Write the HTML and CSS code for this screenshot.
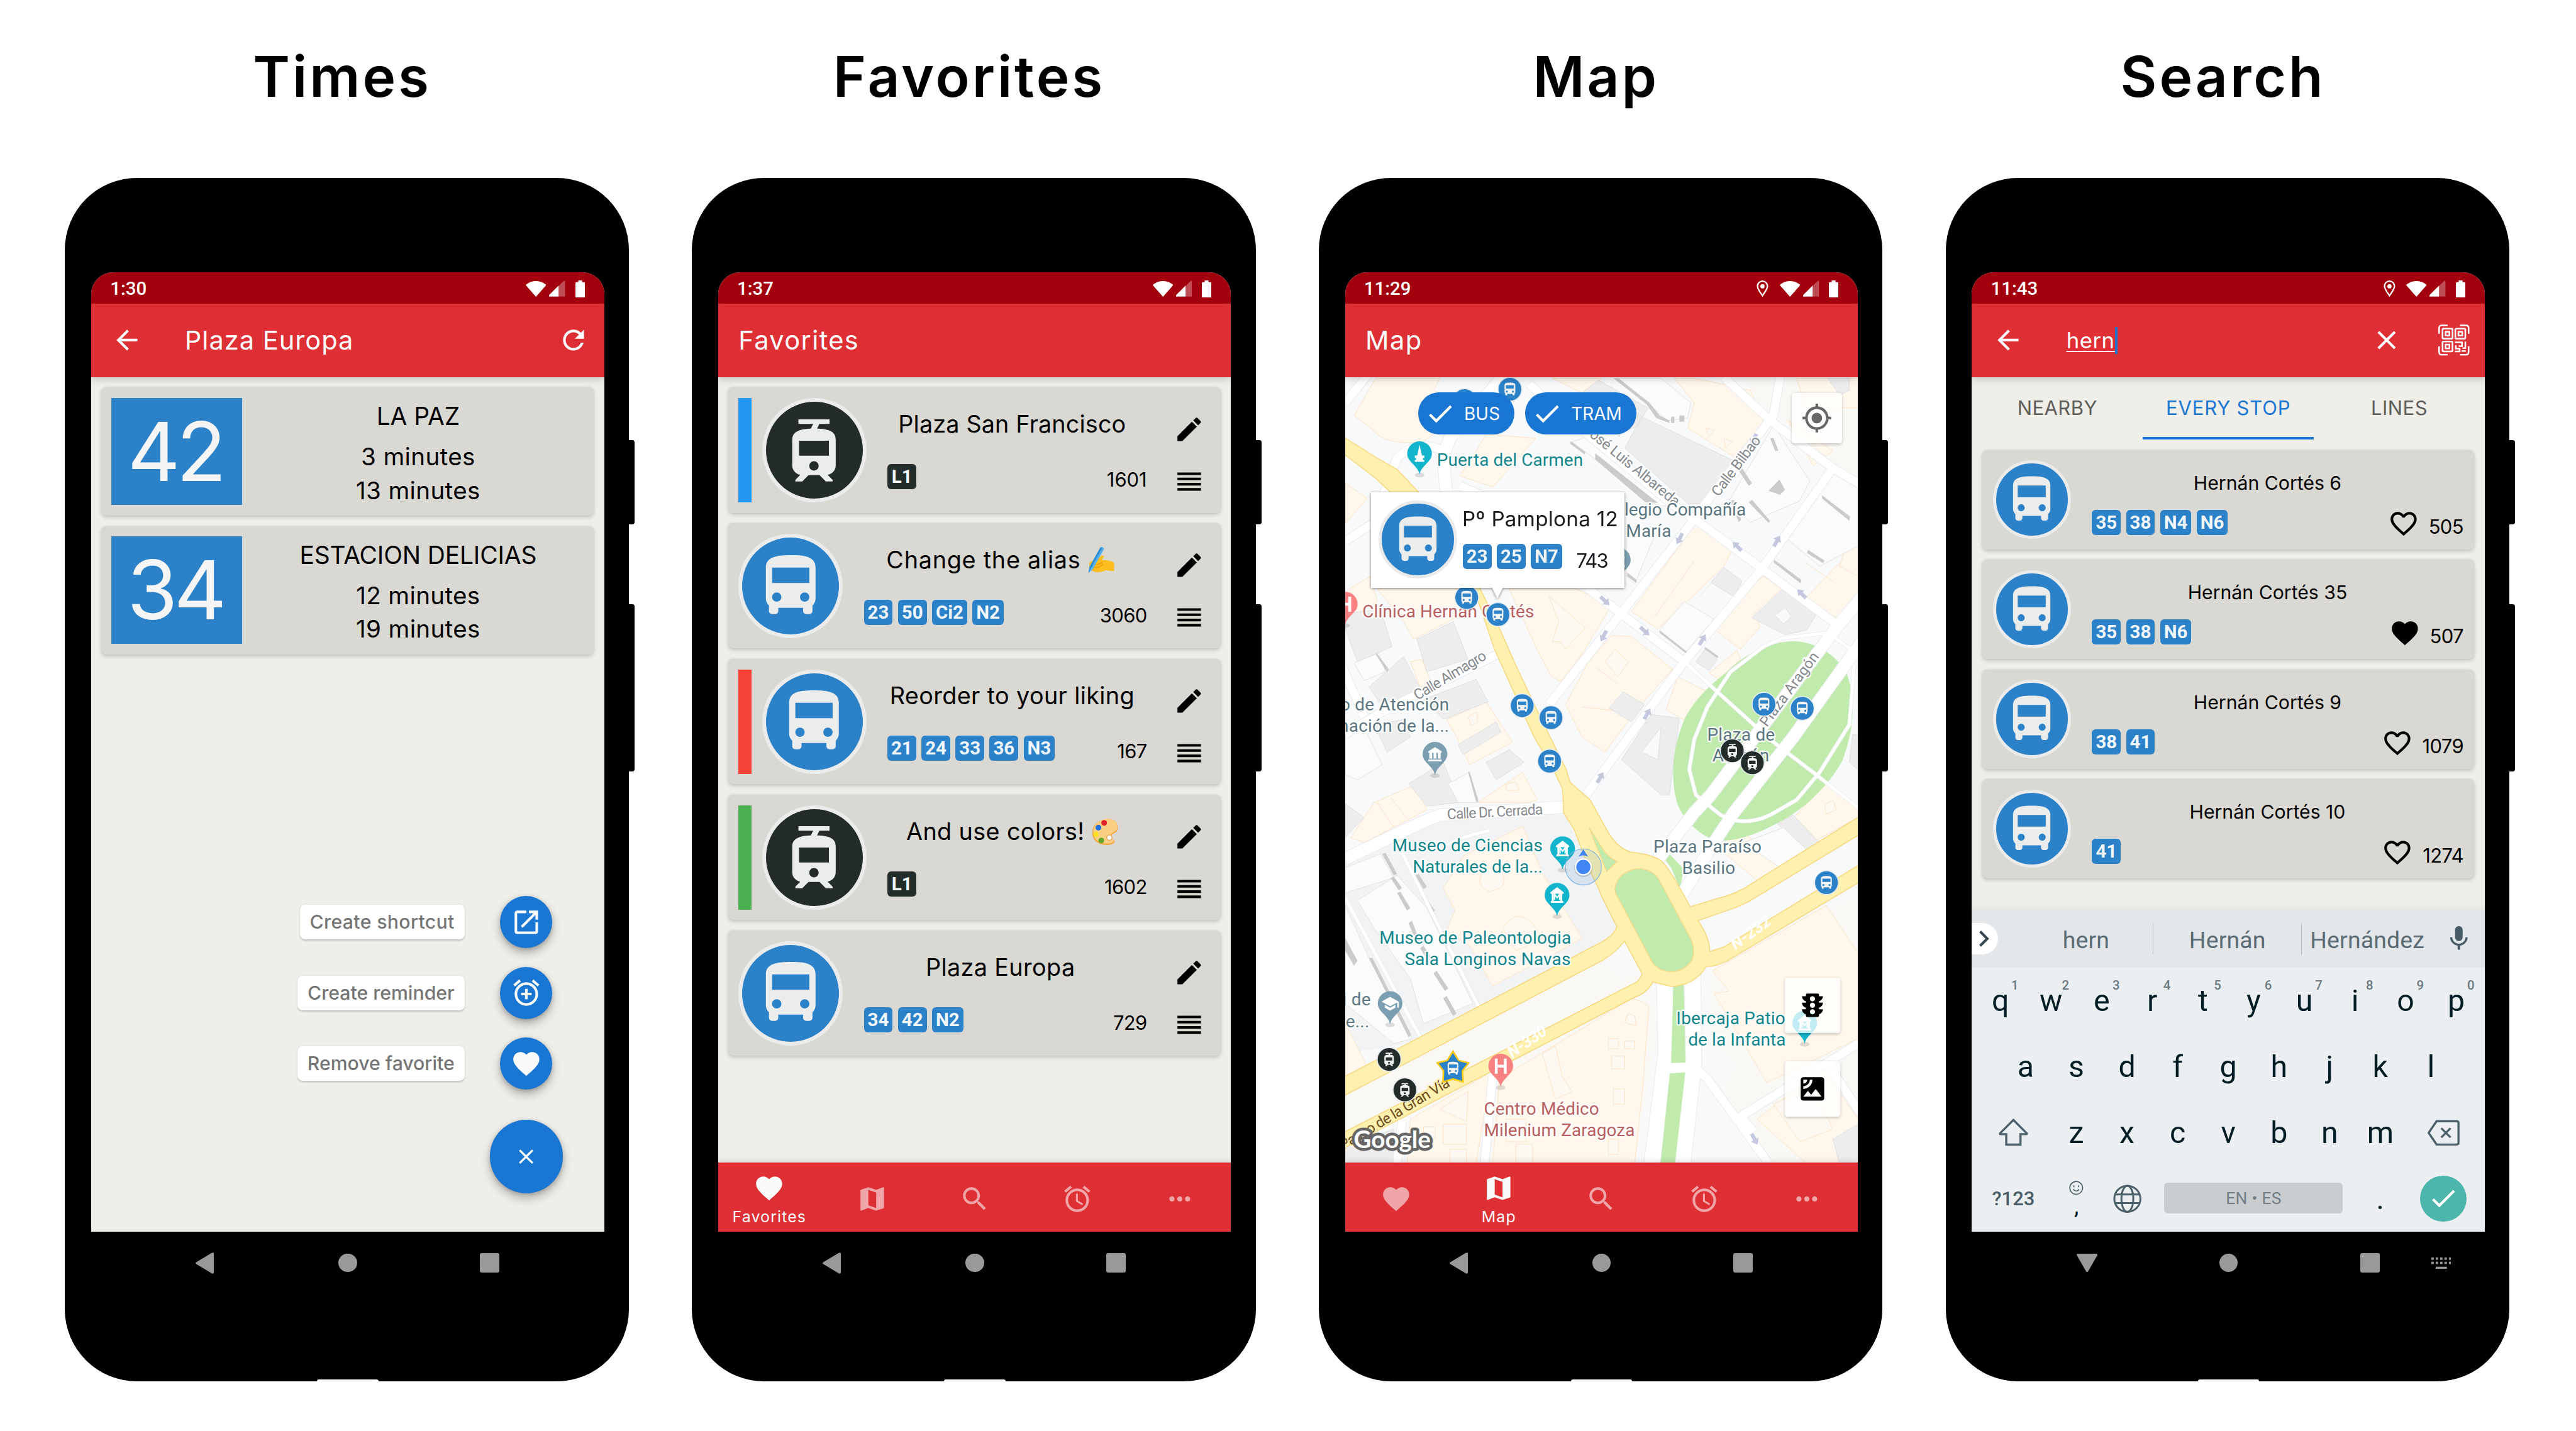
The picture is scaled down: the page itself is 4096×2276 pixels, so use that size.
FILE: index.html
```
<!DOCTYPE html>
<html lang="en">
<head>
<meta charset="utf-8">
<title>Bus and tram app</title>
<link rel="stylesheet" href="styles.css">
</head>
<body>
<svg class="sprite" aria-hidden="true">
  <symbol id="i-back" viewBox="0 0 24 24"><path d="M20 11H7.83l5.59-5.59L12 4l-8 8 8 8 1.41-1.41L7.83 13H20v-2z"/></symbol>
  <symbol id="i-refresh" viewBox="0 0 24 24"><path d="M17.65 6.35C16.2 4.9 14.21 4 12 4c-4.42 0-7.99 3.58-7.99 8s3.57 8 7.99 8c3.73 0 6.84-2.55 7.73-6h-2.08c-.82 2.33-3.04 4-5.65 4-3.31 0-6-2.69-6-6s2.69-6 6-6c1.66 0 3.14.69 4.22 1.78L13 11h7V4l-2.35 2.35z"/></symbol>
  <symbol id="i-open" viewBox="0 0 24 24"><path d="M19 19H5V5h7V3H5c-1.11 0-2 .9-2 2v14c0 1.1.89 2 2 2h14c1.1 0 2-.9 2-2v-7h-2v7zM14 3v2h3.59l-9.83 9.83 1.41 1.41L19 6.41V10h2V3h-7z"/></symbol>
  <symbol id="i-addalarm" viewBox="0 0 24 24"><path d="M7.88 3.39L6.6 1.86 2 5.71l1.29 1.53 4.59-3.85zM22 5.72l-4.6-3.86-1.29 1.53 4.6 3.86L22 5.72zM12 4c-4.97 0-9 4.03-9 9s4.02 9 9 9c4.97 0 9-4.03 9-9s-4.03-9-9-9zm0 16c-3.87 0-7-3.13-7-7s3.13-7 7-7 7 3.13 7 7-3.13 7-7 7zm1-11h-2v3H8v2h3v3h2v-3h3v-2h-3V9z"/></symbol>
  <symbol id="i-alarm" viewBox="0 0 24 24"><path d="M22 5.72l-4.6-3.86-1.29 1.53 4.6 3.86L22 5.72zM7.88 3.39L6.6 1.86 2 5.71l1.29 1.53 4.59-3.85zM12.5 8H11v6l4.75 2.85.75-1.23-4-2.37V8zM12 4c-4.97 0-9 4.03-9 9s4.02 9 9 9c4.97 0 9-4.03 9-9s-4.03-9-9-9zm0 16c-3.87 0-7-3.13-7-7s3.13-7 7-7 7 3.13 7 7-3.13 7-7 7z"/></symbol>
  <symbol id="i-heart" viewBox="0 0 24 24"><path d="M12 21.35l-1.45-1.32C5.4 15.36 2 12.28 2 8.5 2 5.42 4.42 3 7.5 3c1.74 0 3.41.81 4.5 2.09C13.09 3.81 14.76 3 16.5 3 19.58 3 22 5.42 22 8.5c0 3.78-3.4 6.86-8.55 11.54L12 21.35z"/></symbol>
  <symbol id="i-heart-line" viewBox="0 0 24 24"><path d="M16.5 3c-1.74 0-3.41.81-4.5 2.09C10.91 3.81 9.24 3 7.5 3 4.42 3 2 5.42 2 8.5c0 3.78 3.4 6.86 8.55 11.54L12 21.35l1.45-1.32C18.6 15.36 22 12.28 22 8.5 22 5.42 19.58 3 16.5 3zm-4.4 15.55l-.1.1-.1-.1C7.14 14.24 4 11.39 4 8.5 4 6.5 5.5 5 7.5 5c1.54 0 3.04.99 3.57 2.36h1.87C13.46 5.99 14.96 5 16.5 5c2 0 3.5 1.5 3.5 3.5 0 2.89-3.14 5.74-7.9 10.05z"/></symbol>
  <symbol id="i-close" viewBox="0 0 24 24"><path d="M19 6.41L17.59 5 12 10.59 6.41 5 5 6.41 10.59 12 5 17.59 6.41 19 12 13.41 17.59 19 19 17.59 13.41 12z"/></symbol>
  <symbol id="i-edit" viewBox="0 0 24 24"><path d="M3 17.25V21h3.75L17.81 9.94l-3.75-3.75L3 17.25zM20.71 7.04c.39-.39.39-1.02 0-1.41l-2.34-2.34c-.39-.39-1.02-.39-1.41 0l-1.83 1.83 3.75 3.75 1.83-1.83z"/></symbol>
  <symbol id="i-reorder" viewBox="0 0 24 24"><path d="M3 15h18v-2H3v2zm0 4h18v-2H3v2zm0-8h18V9H3v2zm0-6v2h18V5H3z"/></symbol>
  <symbol id="i-map" viewBox="0 0 24 24"><path d="M20.5 3l-.16.03L15 5.1 9 3 3.36 4.9c-.21.07-.36.25-.36.48V20.5c0 .28.22.5.5.5l.16-.03L9 18.9l6 2.1 5.64-1.9c.21-.07.36-.25.36-.48V3.5c0-.28-.22-.5-.5-.5zM15 19l-6-2.11V5l6 2.11V19z"/></symbol>
  <symbol id="i-search" viewBox="0 0 24 24"><path d="M15.5 14h-.79l-.28-.27C15.41 12.59 16 11.11 16 9.5 16 5.91 13.09 3 9.5 3S3 5.91 3 9.5 5.91 16 9.5 16c1.61 0 3.09-.59 4.23-1.57l.27.28v.79l5 4.99L20.49 19l-4.99-5zm-6 0C7.01 14 5 11.99 5 9.5S7.01 5 9.5 5 14 7.01 14 9.5 11.99 14 9.5 14z"/></symbol>
  <symbol id="i-more" viewBox="0 0 24 24"><path d="M6 10c-1.1 0-2 .9-2 2s.9 2 2 2 2-.9 2-2-.9-2-2-2zm12 0c-1.1 0-2 .9-2 2s.9 2 2 2 2-.9 2-2-.9-2-2-2zm-6 0c-1.1 0-2 .9-2 2s.9 2 2 2 2-.9 2-2-.9-2-2-2z"/></symbol>
  <symbol id="i-check" viewBox="0 0 24 24"><path d="M9 16.17L4.83 12l-1.42 1.41L9 19 21 7l-1.41-1.41z"/></symbol>
  <symbol id="i-gps" viewBox="0 0 24 24"><path d="M12 8c-2.21 0-4 1.79-4 4s1.790 4 4 4 4-1.790 4-4-1.790-4-4-4zm8.940 3c-.46-4.170-3.770-7.480-7.940-7.940V1h-2v2.060C6.830 3.520 3.520 6.830 3.060 11H1v2h2.060c.46 4.170 3.770 7.480 7.940 7.940V23h2v-2.060c4.170-.46 7.480-3.770 7.940-7.940H23v-2h-2.060zM12 19c-3.870 0-7-3.130-7-7s3.130-7 7-7 7 3.130 7 7-3.130 7-7 7z"/></symbol>
  <symbol id="i-traffic" viewBox="0 0 24 24"><path d="M20 10h-3V8.860c1.720-.45 3-2 3-3.860h-3V4c0-.55-.45-1-1-1H8c-.55 0-1 .45-1 1v1H4c0 1.860 1.280 3.410 3 3.860V10H4c0 1.860 1.280 3.410 3 3.860V15H4c0 1.860 1.280 3.410 3 3.860V20c0 .55.45 1 1 1h8c.55 0 1-.45 1-1v-1.140c1.720-.45 3-2 3-3.860h-3v-1.140c1.720-.45 3-2 3-3.860zm-8 9c-1.110 0-2-.9-2-2s.89-2 2-2c1.100 0 2 .9 2 2s-.89 2-2 2zm0-5c-1.110 0-2-.9-2-2s.89-2 2-2c1.100 0 2 .9 2 2s-.89 2-2 2zm0-5c-1.110 0-2-.9-2-2 0-1.110.89-2 2-2 1.100 0 2 .89 2 2 0 1.100-.89 2-2 2z"/></symbol>
  <symbol id="i-satellite" viewBox="0 0 24 24"><path d="M19 3H5c-1.100 0-2 .9-2 2v14c0 1.100.9 2 2 2h14c1.100 0 2-.9 2-2V5c0-1.100-.9-2-2-2zM5 4.990h3C8 6.650 6.660 8 5 8V4.990zM5 12v-2c2.760 0 5-2.250 5-5.010h2C12 8.860 8.870 12 5 12zm0 6l3.500-4.500 2.500 3.010L14.500 12l4.500 6H5z"/></symbol>
  <symbol id="i-mic" viewBox="0 0 24 24"><path d="M12 14c1.660 0 3-1.340 3-3V5c0-1.660-1.340-3-3-3S9 3.340 9 5v6c0 1.660 1.340 3 3 3zm5.300-3c0 3-2.540 5.100-5.300 5.100S6.700 14 6.700 11H5c0 3.410 2.720 6.230 6 6.720V21h2v-3.280c3.280-.48 6-3.300 6-6.720h-1.700z"/></symbol>
  <symbol id="i-bus" viewBox="0 0 24 24"><path d="M4 16c0 .88.39 1.67 1 2.22V20c0 .55.45 1 1 1h1c.55 0 1-.45 1-1v-1h8v1c0 .55.45 1 1 1h1c.55 0 1-.45 1-1v-1.78c.61-.55 1-1.34 1-2.22V6c0-3.5-3.58-4-8-4s-8 .5-8 4v10zm3.5 1c-.83 0-1.500-.67-1.500-1.500S6.670 14 7.500 14s1.500.67 1.500 1.500S8.330 17 7.500 17zm9 0c-.83 0-1.500-.67-1.500-1.500s.67-1.500 1.500-1.500 1.500.67 1.500 1.500-.67 1.500-1.500 1.500zm1.500-6H6V6h12v5z"/></symbol>
  <symbol id="i-tram" viewBox="0 0 24 24"><path fill-rule="evenodd" d="M19 16.940V8.500c0-2.790-2.610-3.400-6.010-3.490l.76-1.510H17V2H7v1.500h4.750l-.76 1.520C7.860 5.110 5 5.730 5 8.500v8.440c0 1.450 1.190 2.660 2.590 2.970L6 21.500v.5h2.230l2-2H13.800l2 2H18v-.5l-1.600-1.600C17.800 19.600 19 18.390 19 16.940zM12 18.500c-.83 0-1.500-.67-1.500-1.500s.67-1.500 1.500-1.500 1.500.67 1.500 1.500-.67 1.500-1.500 1.500zm4.800-4.800H7.200V8.900h9.600z"/></symbol>
  <symbol id="i-wifi" viewBox="0 0 43 33"><path d="M.8 7.200Q21.500-7.200 42.200 7.200q1.200 1 .2 2.200L21.500 33 .6 9.400Q-.4 8.200.8 7.200z"/></symbol>
  <symbol id="i-signal" viewBox="0 0 34 34"><path opacity=".3" d="M1 34h31q2 0 2-2V2q-1-3-3-1L0 31q-1 3 1 3z"/><path d="M1 34h19V11L0 31q-1 3 1 3z"/></symbol>
  <symbol id="i-battery" viewBox="0 0 20 36"><path d="M6 0h8v3.500h4q2 0 2 2V34q0 2-2 2H2q-2 0-2-2V5.500q0-2 2-2h4z"/></symbol>
  <symbol id="i-place" viewBox="0 0 25 35"><path fill="none" stroke="#fff" stroke-width="3" d="M12.500 32C8 25 2 19 2 12a10.500 10.500 0 0 1 21 0c0 7-6 13-10.500 20z"/><circle cx="12.500" cy="12.500" r="4.500"/></symbol>
  <symbol id="i-qr" viewBox="0 0 66 66"><g fill="none" stroke="#fff" stroke-width="3.400"><path d="M1.700 20V8q0-6 6-6h12M46 2h12q6 0 6 6v12M1.700 46v12q0 6 6 6h12M46 64h12q6 0 6-6V46"/><rect x="9" y="9" width="21" height="21" rx="2"/><rect x="36" y="9" width="21" height="21" rx="2"/><rect x="9" y="36" width="21" height="21" rx="2"/><rect x="15.500" y="15.500" width="8" height="8"/><rect x="42.500" y="15.500" width="8" height="8"/><rect x="15.500" y="42.500" width="8" height="8"/><path d="M35 37.700h15v8h-7M57 36v14h-6M37 44v7h8v6H35M49 56h9"/></g></symbol>
  <symbol id="n-left" viewBox="0 0 39 45"><path d="M1.500 20.500 34 1q4-2 4.500 2v39q-.5 4-4.500 2L1.500 24.500q-3-2 0-4z"/></symbol>
  <symbol id="n-down" viewBox="0 0 44 39"><path d="M20 37.500.8 4Q-1 .5 3 0h38q4 .5 2.200 4L24 37.500q-2 3-4 0z"/></symbol>
  <symbol id="n-keys" viewBox="0 0 42 24"><path d="M0 0h5v5H0zM9.200 0h5v5h-5zM18.500 0h5v5h-5zM27.700 0h5v5h-5zM37 0h5v5h-5zM0 9h5v5H0zM9.200 9h5v5h-5zM18.500 9h5v5h-5zM27.700 9h5v5h-5zM37 9h5v5h-5zM9.200 19.500h23.500V24H9.200z"/></symbol>
  <symbol id="e-write" viewBox="0 0 56 56"><path d="M3 40Q1 30 10 29q3-7 12-5l7-6q4-1 5 2l-5 7 12 1q12 2 14 6v17L38 49q-15 7-27 2Q3 48 3 40z" fill="#fcbe1e"/><path d="M8 42q14 4 24-6M12 36q10 3 18-4" fill="none" stroke="#e89b00" stroke-width="2"/><path d="M26 1q6-2 8 3L10 47 1 55l2-13z" fill="#5ab3ec"/><path d="M26 1q3-1 5 0L5 47l-4 8 2-13z" fill="#2d8fd5"/></symbol>
  <symbol id="e-palette" viewBox="0 0 56 56"><path d="M28 2C44-3 58 8 54 24c-2 8-12 6-13 13s8 7 7 12-14 8-24 6C6 52-2 38 2 22 6 10 16 3 28 2z" fill="#f3a641"/><path d="M29 1C44-2 57 8 53 22c-2 7-13 7-14 14s8 7 7 11-12 7-21 5C8 49 0 36 4 21 8 9 18 2 29 1z" fill="#fbcf83"/><circle cx="26" cy="9" r="6" fill="#e0242c"/><circle cx="14" cy="19" r="6" fill="#1f6fe0"/><circle cx="9" cy="33" r="5.500" fill="#ffe01b"/><circle cx="20" cy="46" r="6" fill="#62a829"/><circle cx="37" cy="40" r="5.500" fill="#fff" stroke="#e8a95b" stroke-width="2"/></symbol>
  <symbol id="m-bus" viewBox="-27 -27 54 54"><circle r="25" fill="#2c82c9" stroke="#e6ebef" stroke-width="2"/><use href="#i-bus" x="-17" y="-17" width="34" height="34" fill="#f1f3f4"/></symbol>
  <symbol id="m-tram" viewBox="-27 -27 54 54"><circle r="25" fill="#232b2b" stroke="#e6ebef" stroke-width="2"/><use href="#i-tram" x="-17" y="-17" width="34" height="34" fill="#f1f3f4"/></symbol>
  <symbol id="m-museum" viewBox="-27 -27 54 78"><ellipse cy="45" rx="10" ry="5" fill="#000" opacity=".12"/><path d="M0 44C-3 25-26 18-26 0a26 26 0 0 1 52 0C26 18 3 25 0 44z" fill="#12b5cb"/><path d="M0-17 14-6v3H-14v-3zM-13 12h26v4h-26zM-11-3h4v15h-4zM7-3h4v15H7z" fill="#fff"/><path d="M-5.500 10V-2L0 5l5.500-7v12" fill="none" stroke="#fff" stroke-width="3"/></symbol>
  <symbol id="m-civic" viewBox="-27 -27 54 78"><ellipse cy="45" rx="10" ry="5" fill="#000" opacity=".12"/><path d="M0 44C-3 25-26 18-26 0a26 26 0 0 1 52 0C26 18 3 25 0 44z" fill="#7b9eb0"/><path d="M0-15 14-6v3H-14v-3zM-14 11h28v4h-28zM-12-3h6v12h-6zM-3-3h6v12h-6zM6-3h6v12H6z" fill="#fff"/></symbol>
  <symbol id="m-school" viewBox="-27 -27 54 78"><ellipse cy="45" rx="10" ry="5" fill="#000" opacity=".12"/><path d="M0 44C-3 25-26 18-26 0a26 26 0 0 1 52 0C26 18 3 25 0 44z" fill="#7b9eb0"/><path d="M0-14 18-4v13h-3V-2L0 6-18-4zM-11 3 0 9 11 3v6L0 15-11 9z" fill="#fff"/></symbol>
  <symbol id="m-monument" viewBox="-27 -27 54 78"><ellipse cy="45" rx="10" ry="5" fill="#000" opacity=".12"/><path d="M0 44C-3 25-26 18-26 0a26 26 0 0 1 52 0C26 18 3 25 0 44z" fill="#12b5cb"/><path d="M0-19 5 4h5v5H7v4h3v4h-20v-4h3V9h-3V4h5z" fill="#fff"/></symbol>
  <symbol id="m-hospital" viewBox="-27 -27 54 78"><ellipse cy="45" rx="10" ry="5" fill="#000" opacity=".12"/><path d="M0 44C-3 25-26 18-26 0a26 26 0 0 1 52 0C26 18 3 25 0 44z" fill="#f88181"/><path d="M-9.500-16v32M9.500-16v32M-9.500 0h19" stroke="#fff" stroke-width="6" fill="none"/></symbol>
  <symbol id="m-arrow" viewBox="-14 -14 28 28"><path d="M-4 13V-1h-5L0-13 9-1H4v14z" fill="#c3c8de"/></symbol>
</svg>

<main class="showcase">

  <section class="column">
    <h1 class="title">Times</h1>
    <div class="phone">
      <div class="screen">
        <div class="status"><span>1:30</span><svg class="wifi"><use href="#i-wifi"/></svg><svg class="signal"><use href="#i-signal"/></svg><svg class="battery"><use href="#i-battery"/></svg></div>
        <header class="appbar"><svg class="icon back"><use href="#i-back"/></svg><h2>Plaza Europa</h2><svg class="icon end"><use href="#i-refresh"/></svg></header>
        <div class="list">
          <article class="card time"><div class="line">42</div><div class="arrivals"><h3>LA PAZ</h3><p>3 minutes</p><p>13 minutes</p></div></article>
          <article class="card time"><div class="line">34</div><div class="arrivals"><h3>ESTACION DELICIAS</h3><p>12 minutes</p><p>19 minutes</p></div></article>
        </div>
        <div class="actions">
          <div class="action"><span class="a1">Create shortcut</span><i class="fab"><svg class="icon"><use href="#i-open"/></svg></i></div>
          <div class="action"><span>Create reminder</span><i class="fab"><svg class="icon"><use href="#i-addalarm"/></svg></i></div>
          <div class="action"><span>Remove favorite</span><i class="fab"><svg class="icon"><use href="#i-heart"/></svg></i></div>
          <i class="fab main"><svg><use href="#i-close"/></svg></i>
        </div>
      </div>
      <nav class="system"><svg class="tri"><use href="#n-left"/></svg><i class="dot"></i><i class="square"></i></nav>
      <i class="key power"></i><i class="key volume"></i><i class="port"></i>
    </div>
  </section>

  <section class="column">
    <h1 class="title">Favorites</h1>
    <div class="phone">
      <div class="screen">
        <div class="status"><span>1:37</span><svg class="wifi"><use href="#i-wifi"/></svg><svg class="signal"><use href="#i-signal"/></svg><svg class="battery"><use href="#i-battery"/></svg></div>
        <header class="appbar top"><h2>Favorites</h2></header>
        <div class="list">
          <article class="card fav"><i class="tag blue"></i><i class="stop tram"><svg><use href="#i-tram"/></svg></i><div class="info"><h3 class="n1">Plaza San Francisco</h3><div class="meta"><b class="dark">L1</b><span class="n1601">1601</span></div></div><div class="tools"><svg class="icon"><use href="#i-edit"/></svg><svg class="icon"><use href="#i-reorder"/></svg></div></article>
          <article class="card fav"><i class="stop"><svg><use href="#i-bus"/></svg></i><div class="info"><h3 class="n2">Change the alias <svg class="emoji"><use href="#e-write"/></svg></h3><div class="meta"><b>23</b><b>50</b><b>Ci2</b><b>N2</b><span>3060</span></div></div><div class="tools"><svg class="icon"><use href="#i-edit"/></svg><svg class="icon"><use href="#i-reorder"/></svg></div></article>
          <article class="card fav"><i class="tag red"></i><i class="stop"><svg><use href="#i-bus"/></svg></i><div class="info"><h3>Reorder to your liking</h3><div class="meta"><b>21</b><b>24</b><b>33</b><b>36</b><b>N3</b><span>167</span></div></div><div class="tools"><svg class="icon"><use href="#i-edit"/></svg><svg class="icon"><use href="#i-reorder"/></svg></div></article>
          <article class="card fav"><i class="tag green"></i><i class="stop tram"><svg><use href="#i-tram"/></svg></i><div class="info"><h3>And use colors! <svg class="emoji"><use href="#e-palette"/></svg></h3><div class="meta"><b class="dark">L1</b><span>1602</span></div></div><div class="tools"><svg class="icon"><use href="#i-edit"/></svg><svg class="icon"><use href="#i-reorder"/></svg></div></article>
          <article class="card fav"><i class="stop"><svg><use href="#i-bus"/></svg></i><div class="info"><h3>Plaza Europa</h3><div class="meta"><b>34</b><b>42</b><b>N2</b><span>729</span></div></div><div class="tools"><svg class="icon"><use href="#i-edit"/></svg><svg class="icon"><use href="#i-reorder"/></svg></div></article>
        </div>
        <footer class="tabs"><a class="on"><svg class="icon"><use href="#i-heart"/></svg>Favorites</a><a><svg class="icon"><use href="#i-map"/></svg></a><a><svg class="icon"><use href="#i-search"/></svg></a><a><svg class="icon"><use href="#i-alarm"/></svg></a><a><svg class="icon"><use href="#i-more"/></svg></a></footer>
      </div>
      <nav class="system"><svg class="tri"><use href="#n-left"/></svg><i class="dot"></i><i class="square"></i></nav>
      <i class="key power"></i><i class="key volume"></i><i class="port"></i>
    </div>
  </section>

  <section class="column">
    <h1 class="title">Map</h1>
    <div class="phone">
      <div class="screen">
        <div class="status"><span>11:29</span><svg class="place"><use href="#i-place"/></svg><svg class="wifi"><use href="#i-wifi"/></svg><svg class="signal"><use href="#i-signal"/></svg><svg class="battery"><use href="#i-battery"/></svg></div>
        <header class="appbar top"><h2>Map</h2></header>
        <div class="map">
          <svg class="terrain" viewBox="3 8 1553.500 3125" preserveAspectRatio="none">
            <defs>
              <g id="lanes-s"><path d="M1490 1010 1470 1025 1330 1045 1270 1080 1170 1180 1100 1320 1060 1450 1045 1568 1065 1670 1140 1750Q1210 1800 1290 1750L1370 1690 1440 1580 1530 1390 1545 1150M1030 1140 1130 1260 1290 1450 1420 1580 1556 1720M440 1812Q340 1840 300 1880M175 1900 410 2520M3 2080 235 2645M1470 1030 1556 1110"/></g>
              <g id="lanes-m"><path d="M560 35 640 130 1000 520 1070 580 1265 770 1500 1000M1320 8 1300 160 1100 500 1050 590 840 945 620 1310M1150 8 1290 180 1480 370 1570 440M1480 370 1265 770 1030 1140 735 1665M735 845 840 950 1030 1140M465 1110 100 1350 3 1430M-5 1160 60 1360M1060 2755 1100 2800 1285 3136M1556 2660 1200 2950 1240 3010M175 2970 160 3136M450 2780 425 3136M1470 2750 1570 2950M300 300Q220 250 160 330L120 470M75 -8 3 110M3 660 110 570M350 440 420 480"/></g>
              <g id="lanes-l"><path d="M1570 880 1490 1005 1300 1340 1110 1670 1060 1740 945 1935M1570 1055 1360 1440 1180 1740 1100 1900 1022 2070M670 1718 290 1750Q260 1760 3 1925M490 -8 320 250 300 320 308 460"/></g>
              <g id="lanes-xl"><path d="M970 2400 975 2700 932 3140M1055 2380 1058 2740 1025 3140M975 2755H1065"/></g>
            </defs>
            <rect x="3" y="8" width="1554" height="3126" fill="#f8f9fb"/>
            <path fill="#f1f3f5" d="M3 1930 290 1760 664 1735 827 2195 780 2260 410 2530 235 2650 3 2700z"/>
            <path fill="#f9f8f4" d="M1210 8h346v420L1330 180 1240 90zM1110 2370 1400 2160 1556 2080V3136H1290L1080 2740 1100 2600zM3 2865 780 2330 849 2252 900 2375 880 2420 3 3008zM680 2600 930 2440 950 2600 880 3136H200L450 2780z"/>
            <path fill="#f8f9fb" d="M780 2320 849 2252 900 2375 840 2400zM1090 2600 1180 2740 1150 2850 1085 2740z"/>
            <g class="beige">
              <path d="M95 12H290L270 60 370 130 240 265Q120 280 90 220L30 160zM430 235 580 250 450 445 350 400 400 300zM3 430 70 490 3 590zM630 12H780L720 70zM1000 12H1060L1230 60 1270 180 1200 340 1040 210 1060 110zM1370 12H1556V130H1400zM1345 180 1480 300 1420 360zM1065 590 1180 680 1150 760 1040 900 950 1010 870 940zM1270 800 1325 850 1240 950 1260 1000 1200 1090 1120 1010 1190 880zM1385 905 1490 760 1556 700V880L1495 965z"/>
              <path d="M1535 620 1556 600V800L1500 760zM500 850H700L810 910 780 980 720 1110 655 1220 625 1195 580 1080zM810 1035 870 1040 995 1170 940 1250 880 1340 790 1500 720 1440 670 1310 740 1140zM1010 1200 1100 1260 1045 1385 975 1330zM1190 1095 1200 1130 1135 1210 1105 1185zM15 850 80 800 100 900 40 950zM100 850H380L400 930 330 970 210 1050 180 980zM200 1140 235 1130 265 1230 230 1240z"/>
              <path d="M310 1370 430 1300 510 1460 380 1550 340 1440zM405 1700 540 1580 585 1690 560 1700zM20 1840 90 1700 215 1630 250 1730 60 1860zM365 1910 540 1795 600 1980 720 2240 640 2300 450 2430 380 2270 310 2210 335 2130 300 2040zM3 2580 75 2765 3 2790zM200 2960 430 2785 440 2800 400 3136H190z"/>
              <path d="M470 2800 870 2480Q930 2500 922 2530L905 2820 880 3136H450zM1115 2370 1460 2110 1556 2300V2640L1280 2815 1120 2460 1165 2450zM1250 2960 1450 2760 1556 2960V3136H1400zM1335 1795 1460 1625 1556 1720V1760L1430 1850zM1140 1890 1190 1815 1370 1930 1290 1985 1250 2010z"/>
            </g>
            <g class="bare">
              <path d="M620 880 730 1005 670 1090 655 1060 630 1060 650 980zM820 1090 860 1140 830 1200 790 1140zM490 1625 520 1620 530 1650 492 1652zM415 1990Q430 1940 480 1980 500 2040 440 2055 400 2030 415 1990zM480 2200Q520 2120 570 2180L600 2240 520 2290zM1095 210 1120 220 1105 245zM1150 250 1175 265 1155 290zM290 2920 375 2850 370 2970zM375 1360 400 1340 405 1380 385 1395zM1455 1710 1480 1690 1490 1730 1460 1745z"/>
              <path d="M300 2980H370V3060H300zM320 3080H370V3136H320zM240 2990H275V3040H240zM490 2960H550V3050H490zM520 3060H570V3136H520zM800 2640H830V2680H800zM850 2650H880V2680H850zM810 2710H850V2760H810zM815 2840H850V2900H815zM800 3040H830V3100H800zM600 2700 640 2670 660 2790 690 2850 640 2880zM860 2540 880 2550 885 2590 850 2575z"/>
              <path d="M1300 2900 1420 2830 1480 3000 1380 3050zM140 1680 200 1780M100 1700 150 1800M940 960 1060 740M760 1160 830 1230M720 1320 850 1340M1075 880 1110 830M1400 750 1480 820"/>
            </g>
            <g class="grey">
              <path d="M720 70 770 20 920 130 890 200 830 240zM900 165 1180 340 1080 510H1040L850 290zM1150 765 1205 820 1180 880 1110 825zM1330 850 1440 930 1400 1015 1335 1032 1235 965zM1095 1085 1130 1130 1105 1175 1065 1140zM3 950 110 930 145 1080 40 1140 3 1010zM220 1050 330 980 375 1130 250 1180zM75 1240 180 1120 240 1270 110 1310z"/>
              <path d="M240 1290 400 1210 435 1300 300 1370zM345 1470 460 1380 475 1420 360 1510zM90 1390 180 1370 200 1440 130 1500zM845 1260 910 1310 870 1380 803 1325zM195 1625 300 1540 350 1700 250 1715zM430 1540 500 1490 545 1540 460 1610zM3 1705 60 1760 3 1840zM930 1350 1015 1365 985 1670H960L840 1530zM3 3070 150 3000 170 3136H3zM1480 3040 1556 2980V3136H1500zM1310 1780 1360 1750 1440 1860 1390 1900zM1540 1430 1530 1540 1556 1570V1430zM1465 12H1530V60L1500 80z"/>
            </g>
            <path class="hole" d="M1335 925 1355 960 1330 990 1305 955zM960 1400 950 1530 900 1500z"/>
            <g class="pale">
              <path d="M690 265 750 240 1010 520 950 520zM830 12H960L1050 110 1040 170 980 180zM1300 200 1410 420 1380 500 1230 585 1165 500zM1340 650 1480 390 1556 450V680L1440 760zM1030 900 1120 970 1035 1100 955 1015zM30 1145 105 1105 125 1180 60 1215zM3 1430 60 1400 115 1550 40 1610 3 1590zM315 1625 378 1580 405 1700 345 1700z"/>
              <path d="M3 1960 110 1905 150 2000 3 2060zM40 2090 160 1990 250 2120 390 2500 240 2580 200 2400 90 2200zM3 2110 75 2320 205 2640 150 2660 3 2500zM1210 1860 1330 1800 1410 1900 1320 1960zM855 640 940 640 880 830 855 800z"/>
            </g>
            <g class="side">
              <path d="M760 310 950 508 912 505 760 335zM685 262 730 305 728 315 684 272zM830 12 925 110 955 160 985 180V190L945 170 915 115 815 12zM990 165H1000V190H990zM1015 160H1030V185H1015zM1170 500 1180 495 1202 575 1195 585zM1225 505 1235 495 1290 580 1285 588zM1195 380 1205 370 1235 430 1225 440zM1290 250 1300 250 1315 300 1305 302zM1285 460 1318 415 1335 455 1320 475zM1447 478 1532 562 1530 580 1447 490zM1303 735 1385 815 1382 828 1300 745zM1405 695 1455 738 1450 748 1402 708zM857 785 886 815 884 826 857 800z"/>
              <path d="M955 1015 1038 1100 1035 1107 955 1025zM1092 1080 1133 1118 1130 1126 1092 1090zM98 1105 135 1170 130 1182 96 1112zM375 1578 380 1578 407 1695 400 1700zM115 1905 125 1900 160 1985 150 1990zM140 2000 150 1995 175 2040 165 2050zM160 2060 170 2055 200 2120 190 2130zM215 1990 225 1985 250 2035 240 2045zM235 2080 245 2075 275 2130 262 2140zM195 2180 205 2170 225 2240 215 2245zM230 2280 240 2270 265 2320 255 2335zM270 2380 280 2370 315 2440 305 2450zM75 2320 85 2318 203 2625 195 2635zM3 2240 40 2330 30 2350 3 2290zM300 2480 310 2470 340 2540 330 2550z"/>
            </g>
            <g fill="#c0ebac">
              <path d="M1155 1185C1210 1110 1290 1060 1360 1058 1440 1062 1490 1120 1520 1180 1555 1300 1540 1420 1510 1530 1480 1610 1400 1730 1300 1790 1250 1825 1180 1860 1130 1850 1080 1840 1030 1770 1010 1710 985 1600 995 1480 1030 1370 1060 1290 1110 1230 1155 1185z"/>
              <path d="M965 1915 985 1905Q1010 1940 1028 1965L1017 2045Q1000 1990 990 1960z"/>
            </g>
            <use href="#lanes-s" class="edge w8"/><use href="#lanes-m" class="edge w15"/><use href="#lanes-l" class="edge w21"/><use href="#lanes-xl" class="edge w25"/>
            <use href="#lanes-s" class="lane w6"/><use href="#lanes-m" class="lane w13"/><use href="#lanes-l" class="lane w19"/><use href="#lanes-xl" class="lane w24"/>
            <path fill="#c0ebac" d="M997 2420H1028L1034 2735 990 2737zM986 2778 1033 2774 1002 3136H958z"/>
            <path class="avenue" d="M-9 240 100 330 160 375 225 465 410 845 468 1000 515 1140 590 1350 672 1568 684 1620 745 1690 800 1820Q830 1885 870 1898 930 1905 960 1932 985 1960 1048 2116L1130 2082Q1190 2065 1240 2018L1570 1748V1820L1250 2075Q1210 2110 1160 2130L1072 2170 1090 2210Q1108 2260 1107 2293L1150 2275 1570 1940V2010L1160 2330Q1120 2356 1097 2352 1060 2430 990 2432L935 2415Q915 2460 880 2475L-9 3081V3018L885 2415Q905 2390 900 2375L849 2252Q820 2300 780 2330L-9 2873V2798L780 2255Q815 2230 826 2195L780 2075 772 2048 740 1960 697 1810 664 1740Q664 1640 655 1630L630 1560 575 1440 455 1090 392 845 180 515 95 410-9 305z"/>
            <path class="island" d="M820 2040Q830 1975 890 1963 930 1965 950 2000L1050 2245Q1075 2330 1020 2365 970 2390 935 2340L830 2080Q818 2055 820 2040zM742 1800 785 1890Q800 1920 826 1935L795 1975Q765 1880 742 1800z"/>
          </svg>
          <svg class="places" viewBox="0 0 1080 1654">
            <g>
              <use href="#m-arrow" width="28" height="28" transform="translate(704 340) rotate(207) translate(-14 -14)"/><use href="#m-arrow" width="28" height="28" transform="translate(825 356) rotate(-45) translate(-14 -14)"/><use href="#m-arrow" width="28" height="28" transform="translate(909 345) rotate(30) translate(-14 -14)"/><use href="#m-arrow" width="28" height="28" transform="translate(961 456) rotate(-45) translate(-14 -14)"/><use href="#m-arrow" width="28" height="28" transform="translate(547 471) rotate(133) translate(-14 -14)"/><use href="#m-arrow" width="28" height="28" transform="translate(631 535) rotate(133) translate(-14 -14)"/><use href="#m-arrow" width="28" height="28" transform="translate(544 545) rotate(207) translate(-14 -14)"/><use href="#m-arrow" width="28" height="28" transform="translate(752 553) rotate(30) translate(-14 -14)"/><use href="#m-arrow" width="28" height="28" transform="translate(636 709) rotate(30) translate(-14 -14)"/><use href="#m-arrow" width="28" height="28" transform="translate(537 843) rotate(30) translate(-14 -14)"/><use href="#m-arrow" width="28" height="28" transform="translate(860 131) rotate(207) translate(-14 -14)"/><use href="#m-arrow" width="28" height="28" transform="translate(862 1605) rotate(152) translate(-14 -14)"/>
            </g>
            <g class="road">
              <text transform="translate(500 113) rotate(39.500)" textLength="252">José Luis Albareda</text>
              <text transform="translate(786 253) rotate(-53)" textLength="150">Calle Bilbao</text>
              <text transform="translate(152 681) rotate(-31)" textLength="172">Calle Almagro</text>
              <text transform="translate(215 931) rotate(-3)" textLength="202">Calle Dr. Cerrada</text>
              <text transform="translate(888 738) rotate(-53.500)" textLength="186">Plaza Aragón</text>
            </g>
            <g class="route"><text transform="translate(822 1207) rotate(-36)" textLength="96">N-232</text><text transform="translate(352 1435) rotate(-35)" textLength="92">N-330</text></g>
            <text class="gran" transform="translate(-4 1628) rotate(-31)" textLength="264">Paseo de la Gran Vía</text>
            <g class="poi slate">
              <text x="844" y="291" text-anchor="end" textLength="301">Colegio Compañía</text><text x="591" y="336">María</text>
              <text x="219" y="702" text-anchor="end">o de Atención</text><text x="219" y="747" text-anchor="end">nación de la...</text>
              <text x="762" y="765">Plaza de</text><text x="773" y="809">Aragón</text>
              <text x="649" y="1001" textLength="228">Plaza Paraíso</text><text x="709" y="1046">Basilio</text>
              <text x="54" y="1323" text-anchor="end">l de</text><text x="51" y="1369" text-anchor="end">de...</text>
            </g>
            <g class="poi rose">
              <text x="36" y="506" textLength="362">Clínica Hernán Cortés</text>
              <text x="292" y="1553" textLength="243">Centro Médico</text><text x="292" y="1598" textLength="318">Milenium Zaragoza</text>
            </g>
            <g class="poi teal">
              <text x="193" y="187" textLength="308">Puerta del Carmen</text>
              <text x="99" y="998" textLength="317">Museo de Ciencias</text><text x="142" y="1044" textLength="274">Naturales de la...</text>
              <text x="72" y="1193" textLength="404">Museo de Paleontologia</text><text x="125" y="1238" textLength="350">Sala Longinos Navas</text>
              <text x="697" y="1363" textLength="230">Ibercaja Patio</text><text x="722" y="1408" textLength="206">de la Infanta</text>
            </g>
            <use href="#m-monument" x="129.500" y="134" width="54" height="78"/>
            <use href="#m-hospital" x="-27" y="451" width="54" height="78"/>
            <use href="#m-civic" x="162" y="767" width="54" height="78"/>
            <use href="#m-civic" x="548" y="358" width="54" height="78"/>
            <use href="#m-museum" x="430.700" y="966" width="54" height="78"/>
            <use href="#m-museum" x="419" y="1064" width="54" height="78"/>
            <use href="#m-school" x="67.500" y="1292" width="54" height="78"/>
            <use href="#m-museum" x="940.500" y="1333" width="54" height="78"/>
            <use href="#m-hospital" x="300.500" y="1424" width="54" height="78"/>
            <use href="#m-bus" x="319.800" y="-1.700" width="54" height="54"/><use href="#m-bus" x="224.300" y="22" width="54" height="54"/>
            <use href="#m-bus" x="228.800" y="437" width="54" height="54"/><use href="#m-bus" x="294.600" y="472.800" width="54" height="54"/>
            <use href="#m-bus" x="345.700" y="664.600" width="54" height="54"/><use href="#m-bus" x="406.300" y="690" width="54" height="54"/><use href="#m-bus" x="403.400" y="781.600" width="54" height="54"/>
            <use href="#m-bus" x="854.700" y="661.700" width="54" height="54"/><use href="#m-bus" x="935.300" y="670.500" width="54" height="54"/><use href="#m-bus" x="986.300" y="1037.500" width="54" height="54"/>
            <use href="#m-tram" x="788" y="759.700" width="54" height="54"/><use href="#m-tram" x="830.200" y="785" width="54" height="54"/>
            <use href="#m-tram" x="65.300" y="1409.800" width="54" height="54"/><use href="#m-tram" x="98.600" y="1474" width="54" height="54"/>
            <g transform="translate(226.900 1452)"><path d="M0-32 12-13 33-8 20 9 21 32 0 26-21 32-20 9-33-8-12-13z" fill="#2c82c9" stroke="#fbc913" stroke-width="3.500"/><use href="#i-bus" x="-17" y="-13" width="34" height="34" fill="#f1f3f4"/></g>
            <g transform="translate(501.400 1031.500)"><circle r="38" fill="#2c82c9" fill-opacity=".13" stroke="#7db1e0" stroke-width="1.500"/><circle r="19.500" cy="2" fill="#000" opacity=".15"/><circle r="16.500" fill="#4285f4" stroke="#fff" stroke-width="3"/><path d="M0-37 10-22Q0-27-10-22z" fill="#4285f4"/></g>
            <text class="logo" x="18" y="1623">Google</text>
          </svg>
          <div class="chips"><span><svg class="icon"><use href="#i-check"/></svg>BUS</span><span><svg class="icon"><use href="#i-check"/></svg>TRAM</span></div>
          <div class="tool locate"><svg class="icon"><use href="#i-gps"/></svg></div>
          <div class="tool traffic"><svg class="icon"><use href="#i-traffic"/></svg></div>
          <div class="tool satellite"><svg class="icon"><use href="#i-satellite"/></svg></div>
          <div class="popup"><i class="stop small"><svg><use href="#i-bus"/></svg></i><div class="info"><h3>Pº Pamplona 12</h3><div class="meta"><b>23</b><b>25</b><b>N7</b><span>743</span></div></div></div>
        </div>
        <footer class="tabs"><a><svg class="icon"><use href="#i-heart"/></svg></a><a class="on"><svg class="icon"><use href="#i-map"/></svg>Map</a><a><svg class="icon"><use href="#i-search"/></svg></a><a><svg class="icon"><use href="#i-alarm"/></svg></a><a><svg class="icon"><use href="#i-more"/></svg></a></footer>
      </div>
      <nav class="system"><svg class="tri"><use href="#n-left"/></svg><i class="dot"></i><i class="square"></i></nav>
      <i class="key power"></i><i class="key volume"></i><i class="port"></i>
    </div>
  </section>

  <section class="column">
    <h1 class="title">Search</h1>
    <div class="phone">
      <div class="screen">
        <div class="status"><span>11:43</span><svg class="place"><use href="#i-place"/></svg><svg class="wifi"><use href="#i-wifi"/></svg><svg class="signal"><use href="#i-signal"/></svg><svg class="battery"><use href="#i-battery"/></svg></div>
        <header class="appbar"><svg class="icon back"><use href="#i-back"/></svg><div class="query"><span>hern</span></div><svg class="icon clear"><use href="#i-close"/></svg><svg class="icon qr"><use href="#i-qr"/></svg></header>
        <nav class="pages"><a>NEARBY</a><a class="on">EVERY STOP</a><a>LINES</a></nav>
        <div class="list results">
          <article class="card hit"><i class="stop small"><svg><use href="#i-bus"/></svg></i><div class="info"><h3>Hernán Cortés 6</h3><div class="meta"><b>35</b><b>38</b><b>N4</b><b>N6</b><svg class="icon"><use href="#i-heart-line"/></svg><span>505</span></div></div></article>
          <article class="card hit"><i class="stop small"><svg><use href="#i-bus"/></svg></i><div class="info"><h3>Hernán Cortés 35</h3><div class="meta"><b>35</b><b>38</b><b>N6</b><svg class="icon"><use href="#i-heart"/></svg><span>507</span></div></div></article>
          <article class="card hit"><i class="stop small"><svg><use href="#i-bus"/></svg></i><div class="info"><h3>Hernán Cortés 9</h3><div class="meta"><b>38</b><b>41</b><svg class="icon"><use href="#i-heart-line"/></svg><span>1079</span></div></div></article>
          <article class="card hit"><i class="stop small"><svg><use href="#i-bus"/></svg></i><div class="info"><h3>Hernán Cortés 10</h3><div class="meta"><b>41</b><svg class="icon"><use href="#i-heart-line"/></svg><span>1274</span></div></div></article>
        </div>
        <div class="keyboard">
          <div class="suggest"><i><svg viewBox="0 0 55 66"><path d="M18 18 33 33 18 48" fill="none" stroke="#37474f" stroke-width="5.500"/></svg></i><span>hern</span><span>Hernán</span><span>Hernández</span><svg class="mic"><use href="#i-mic"/></svg></div>
          <div class="row"><kbd>q<sup>1</sup></kbd><kbd>w<sup>2</sup></kbd><kbd>e<sup>3</sup></kbd><kbd>r<sup>4</sup></kbd><kbd>t<sup>5</sup></kbd><kbd>y<sup>6</sup></kbd><kbd>u<sup>7</sup></kbd><kbd>i<sup>8</sup></kbd><kbd>o<sup>9</sup></kbd><kbd>p<sup>0</sup></kbd></div>
          <div class="row"><kbd>a</kbd><kbd>s</kbd><kbd>d</kbd><kbd>f</kbd><kbd>g</kbd><kbd>h</kbd><kbd>j</kbd><kbd>k</kbd><kbd>l</kbd></div>
          <div class="row"><kbd class="wide"><svg class="shift" viewBox="0 0 62 58"><path d="M31 3 59 31Q60 33 58 33H46V55H16V33H4Q2 33 3 31z"/></svg></kbd><kbd>z</kbd><kbd>x</kbd><kbd>c</kbd><kbd>v</kbd><kbd>b</kbd><kbd>n</kbd><kbd>m</kbd><kbd class="wide"><svg class="erase" viewBox="0 0 70 56"><path d="M20 3H63Q67 3 67 7V49Q67 53 63 53H20L3 28zM30 18 50 38M50 18 30 38"/></svg></kbd></div>
          <div class="row"><kbd class="wide mode">?123</kbd><kbd class="comma"><svg viewBox="0 0 30 30"><circle cx="15" cy="15" r="13.500"/><path d="M8.500 18Q15 25 21.500 18M10 9.500v4M20 9.500v4"/></svg>,</kbd><kbd><svg class="globe" viewBox="0 0 60 60"><circle cx="30" cy="30" r="27.500"/><ellipse cx="30" cy="30" rx="12.500" ry="27.500"/><path d="M5 21H55M5 39H55"/></svg></kbd><kbd class="space">EN • ES</kbd><kbd>.</kbd><kbd class="wide"><i class="enter"><svg class="icon"><use href="#i-check"/></svg></i></kbd></div>
        </div>
      </div>
      <nav class="system typing"><svg class="tri"><use href="#n-down"/></svg><i class="dot"></i><i class="square"></i><svg class="keys"><use href="#n-keys"/></svg></nav>
      <i class="key power"></i><i class="key volume"></i><i class="port"></i>
    </div>
  </section>

</main>
</body>
</html>
```
FILE: styles.css
```
html { font-size: 7.5516px; }
* { box-sizing: border-box; }
body { margin: 0; background: #fff; font-family: Inter, sans-serif; color: #000; font-size: 5rem; overflow: hidden; }
h1, h2, h3, p { margin: 0; font-weight: 400; }
i, kbd { font-style: normal; font-family: inherit; }
.sprite { position: absolute; width: 0; height: 0; }
.icon { width: 6.6rem; height: 6.6rem; flex: none; display: block; fill: currentColor; }

.showcase { display: grid; grid-template-columns: repeat(4, 132rem); padding-left: 5.8rem; width: 542.4rem; height: 301.4rem; overflow: hidden; }
.title { height: 37.5rem; line-height: 32.3rem; text-align: center; font-size: 11.8rem; font-weight: 600; letter-spacing: .044em; text-indent: .044em; }

/* device */
.phone { position: relative; margin-left: 7.9rem; width: 118.7rem; height: 253.4rem; padding: 19.9rem 5.2rem 0 5.5rem; background: #000; border-radius: 15.2rem; }
.screen { display: flex; flex-direction: column; width: 108rem; height: 202rem; background: #efeee9; border-radius: 4.6rem 4.6rem 0 0; overflow: hidden; position: relative; }
.key { position: absolute; right: -1.2rem; width: 2rem; background: #000; border-radius: .5rem; }
.power { top: 55.2rem; height: 17.7rem; }
.volume { top: 89.7rem; height: 35.3rem; }
.port { position: absolute; left: 53.1rem; bottom: 0; width: 12.9rem; height: .35rem; background: #fff; border-radius: .4rem .4rem 0 0; }
.system { display: flex; align-items: center; height: 13.2rem; padding-left: 22rem; color: #999; }
.tri { width: 3.9rem; height: 4.5rem; fill: #999; }
.dot { width: 3.9rem; height: 3.9rem; border-radius: 50%; background: #999; margin-left: 26.2rem; }
.square { width: 4.1rem; height: 4.1rem; border-radius: .4rem; background: #999; margin-left: 25.8rem; }
.typing .tri { width: 4.4rem; height: 3.9rem; }
.typing .dot { margin-left: 25.7rem; }
.keys { width: 4.2rem; height: 2.4rem; fill: #999; margin-left: 10.8rem; }

/* bars */
.status { flex: none; display: flex; align-items: center; height: 6.6rem; padding: 0 4.1rem 0 4rem; background: #a3000d; color: #fff; font: 500 3.9rem/6.6rem Roboto, sans-serif; }
.status span { margin-right: auto; padding-top: .4rem; }
.status svg { fill: #fff; margin-top: .2rem; }
.place { width: 2.5rem; height: 3.5rem; margin-right: 2.3rem; }
.wifi { width: 4.3rem; height: 3.3rem; margin-right: .6rem; }
.signal { width: 3.4rem; height: 3.4rem; margin-right: 2.1rem; }
.battery { width: 2rem; height: 3.6rem; }
.appbar { flex: none; display: flex; align-items: center; height: 15.4rem; padding: 0 3.2rem 0 4.3rem; background: #de2f35; color: #fff; position: relative; z-index: 2; box-shadow: 0 .5rem 1.4rem rgba(0,0,0,.16); }
.appbar.top { padding-left: 4.3rem; }
.appbar h2 { font-size: 5.5rem; letter-spacing: .034em; flex: 1; }
.appbar .back + h2 { margin-left: 8.8rem; letter-spacing: .025em; }
.query { flex: 1; margin-left: 9rem; display: flex; align-items: center; }
.query span { font-size: 4.6rem; line-height: 5.8rem; letter-spacing: .015em; border-right: .6rem solid #1976d2; text-decoration: underline; text-decoration-thickness: .3rem; text-underline-offset: .5rem; }
.clear { margin-right: 7.6rem; }

/* cards */
.list { flex: 1; display: flex; flex-direction: column; gap: 2.2rem; padding: 2.2rem 2.2rem 0 2.1rem; }
.card { flex: none; display: flex; background: #d9d8d2; border-radius: 1rem; box-shadow: 0 .3rem .8rem rgba(0,0,0,.17), 0 0 .3rem rgba(0,0,0,.08); padding: 2.2rem; }
.time { height: 27rem; }
.line { width: 27.5rem; height: 22.6rem; line-height: 22.4rem; background: #2c82c9; color: #f5f5f5; font-size: 17.2rem; text-align: center; letter-spacing: -.045em; text-indent: -.045em; }
.arrivals { flex: 1; text-align: center; font-size: 5.1rem; line-height: 7.05rem; letter-spacing: .01em; padding-top: .3rem; margin-right: -2.3rem; }
.arrivals h3 { font-size: 5.15rem; margin-bottom: 1.6rem; letter-spacing: -.003em; }

.fav { height: 26.4rem; padding-right: 0; }
.tag { width: 2.75rem; height: 22rem; margin-right: 2.2rem; }
.blue { background: #2196f3; }
.red { background: #f44336; }
.green { background: #4caf50; }
.stop { flex: none; width: 22rem; height: 22rem; border-radius: 50%; border: .9rem solid #ebebeb; background: #2c82c9; display: flex; align-items: center; justify-content: center; }
.stop svg { width: 15.7rem; height: 15.7rem; fill: #ebecec; }
.stop.tram { background: #232b2b; }
.stop.small { width: 16.5rem; height: 16.5rem; border-width: .7rem; }
.stop.small svg { width: 11.8rem; height: 11.8rem; }
.info { flex: 1; }
.info h3 { font-size: 5rem; height: 6rem; text-align: center; white-space: nowrap; line-height: 6rem; letter-spacing: .01em; }
.fav .info { padding-top: 2.5rem; }
.info h3.n1 { letter-spacing: .004em; }
.info h3.n2 { letter-spacing: .02em; }
.emoji { width: 5.6rem; height: 5.6rem; vertical-align: -1.1rem; }
.meta { display: flex; align-items: flex-start; gap: 1.1rem; padding: 5.5rem 2.3rem 0 4.4rem; }
.meta b { height: 5.3rem; padding: 0 .8rem; border-radius: .8rem; background: #2c82c9; color: #f1f6fa; font: 700 3.9rem/5.5rem Roboto, sans-serif; }
.meta b.dark { background: #232b2b; padding: 0 .9rem; }
.meta span { margin-left: auto; font-size: 4.1rem; line-height: 5.3rem; margin-top: .6rem; letter-spacing: -.02em; }
.meta .n1601 { letter-spacing: 0; }
.tools { width: 13.2rem; padding-top: 3.3rem; display: flex; flex-direction: column; align-items: center; gap: 4.4rem; }

/* floating actions */
.actions { position: absolute; right: 8.7rem; bottom: 8.1rem; display: flex; flex-direction: column; align-items: flex-end; }
.action { display: flex; align-items: center; margin: 0 2.2rem 3.9rem 0; }
.action span { background: #fff; color: #757575; font-size: 4rem; font-weight: 500; line-height: 7.3rem; height: 7.3rem; padding: 0 2.1rem; border-radius: 1.1rem; margin-right: 7.5rem; box-shadow: 0 .2rem .4rem rgba(0,0,0,.2); }
.action .a1 { letter-spacing: .012em; }
.fab { width: 11rem; height: 11rem; border-radius: 50%; background: #1976d2; color: #fafafa; display: flex; align-items: center; justify-content: center; box-shadow: 0 1rem 2rem rgba(0,0,0,.27), 0 .2rem .8rem rgba(0,0,0,.16); }
.fab.main { width: 15.4rem; height: 15.4rem; margin-top: 2.5rem; }
.fab.main svg { width: 5.2rem; height: 5.2rem; fill: #fff; }

/* bottom tabs */
.tabs { flex: none; height: 14.6rem; display: flex; background: #de2f35; color: #fafafa; position: relative; z-index: 2; box-shadow: 0 -.4rem 1.2rem rgba(0,0,0,.1); }
.tabs a { flex: 1; display: flex; flex-direction: column; align-items: center; padding-top: 4.4rem; font-size: 3.3rem; line-height: 4rem; letter-spacing: .045em; white-space: nowrap; }
.tabs a:not(.on) { color: #f0a5a8; }
.tabs a.on { padding-top: 2.2rem; }
.tabs .on .icon { margin-bottom: .6rem; }

/* map */
.map { flex: 1; position: relative; overflow: hidden; background: #f8f9fb; }
.terrain, .places { position: absolute; left: 0; top: 0; width: 108rem; height: 165.4rem; }
.terrain path { vector-effect: non-scaling-stroke; }
.beige path { fill: #fff7ec; stroke: #fde2c6; stroke-width: 1px; }
.bare path { fill: #fdf9f2; stroke: #fde2c6; stroke-width: 1px; }
.grey path { fill: #ededed; stroke: #dfdfdf; stroke-width: 1px; }
.hole { fill: #f8f9fb; stroke: #dfdfdf; stroke-width: 1px; }
.pale path { fill: #fafbfa; stroke: #e3e3e1; stroke-width: 1px; }
.side path { fill: #cbcbc9; }
.edge, .lane { fill: none; stroke-linejoin: round; }
.edge { stroke: #e7eaee; }
.lane { stroke: #fff; }
.w6 { stroke-width: 5px; } .w8 { stroke-width: 6.5px; }
.w13 { stroke-width: 13px; } .w15 { stroke-width: 15px; }
.w19 { stroke-width: 19px; } .w21 { stroke-width: 21px; }
.w24 { stroke-width: 25px; } .w25 { stroke-width: 27px; }
.avenue { fill: #fef0af; stroke: #f7d77c; stroke-width: 1.5px; }
.island { fill: #c0ebac; stroke: #f3d98a; stroke-width: 1.5px; }
.places text { font-family: Roboto, sans-serif; paint-order: stroke; stroke: #fff; stroke-opacity: .85; stroke-width: 6px; stroke-linejoin: round; }
.road text { font-size: 31px; fill: #86898d; }
.poi text { font-size: 37px; letter-spacing: .3px; }
.slate { fill: #5c7681; }
.rose { fill: #b8605f; }
.teal { fill: #12858c; }
.places .route text { font-size: 34px; font-weight: 700; font-style: italic; fill: #fff; stroke: none; }
.places .gran { font-size: 31px; fill: #6b4a1c; stroke: #fef0af; }
.places .logo { font: 700 51px Lato, sans-serif; fill: #fff; stroke: #666; stroke-opacity: 1; stroke-width: 12px; }
.chips { position: absolute; left: 15.4rem; top: 3.3rem; display: flex; gap: 2.2rem; }
.chips span { display: flex; align-items: center; height: 8.8rem; padding: 0 3.1rem 0 1.3rem; border-radius: 4.4rem; background: #1976d2; color: #fff; font-size: 3.7rem; }
.chips .icon { margin-right: 1.8rem; width: 6.6rem; height: 6.6rem; }
.tool { position: absolute; right: 3.7rem; width: 11.7rem; height: 11.7rem; display: flex; align-items: center; justify-content: center; background: rgba(255,255,255,.74); border-radius: .6rem; box-shadow: 0 .2rem .6rem rgba(0,0,0,.22); }
.locate { top: 3.4rem; right: 3.3rem; width: 10.6rem; height: 10.6rem; color: #666; }
.traffic { top: 126.5rem; }
.satellite { top: 144.1rem; }
.popup { position: absolute; left: 5.5rem; top: 24.3rem; width: 53.4rem; height: 20.1rem; display: flex; padding: 1.7rem 0 0 1.6rem; background: #fff; filter: drop-shadow(0 .2rem .3rem rgba(0,0,0,.5)); }
.popup::after { content: ""; position: absolute; left: 25.4rem; top: 20rem; border: 1.25rem solid transparent; border-top: 2.4rem solid #fff; border-bottom: 0; }
.popup .info h3 { height: auto; text-align: left; font-size: 4.4rem; letter-spacing: .008em; padding: .9rem 0 0 1.1rem; color: #1b1b20; }
.popup .meta { padding: 2.3rem 0 0 1.2rem; }
.popup .meta span { margin: .9rem 0 0 1.9rem; color: #1b1b20; letter-spacing: -.06em; }

/* search */
.pages { display: flex; height: 13.2rem; font-size: 4.1rem; line-height: 13rem; text-align: center; color: #5f5e5b; letter-spacing: .015em; }
.pages a { flex: 1; }
.pages .on { color: #1976d2; border-bottom: .6rem solid #1976d2; letter-spacing: .027em; }
.results { padding-left: 2.2rem; }
.hit { height: 20.9rem; }
.hit .info h3 { height: auto; font-size: 4rem; line-height: 5rem; padding-top: 2.3rem; letter-spacing: 0; }
.hit .meta { padding: 3.1rem .1rem 0 4.4rem; }
.hit .meta .icon { margin: -.4rem .9rem -2rem auto; }
.hit .meta span { margin: .9rem 0 0 0; line-height: 5.3rem; }

/* keyboard */
.keyboard { height: 67.8rem; background: #ebeff2; font-family: Roboto, sans-serif; color: #001d26; position: relative; box-shadow: 0 -.4rem 1rem rgba(0,0,0,.05); }
.suggest { display: flex; align-items: center; height: 12.2rem; background: #e3e7ea; color: #5b6b73; font-size: 4.95rem; }
.suggest i { width: 5.5rem; height: 6.6rem; background: #fff; border-radius: 0 3.3rem 3.3rem 0; margin-right: 4.5rem; }
.suggest i svg { width: 5.5rem; height: 6.6rem; display: block; }
.suggest span { width: 28.1rem; height: 6.6rem; line-height: 7.2rem; text-align: center; letter-spacing: .005em; }
.suggest span + span { width: 31.3rem; border-left: .2rem solid #bcc3c7; }
.suggest span + span + span { width: 27.6rem; }
.mic { width: 6.3rem; height: 6.3rem; fill: #455a64; margin-left: 2.4rem; }
.row { display: flex; justify-content: center; height: 13.9rem; }
kbd { position: relative; display: flex; align-items: center; justify-content: center; width: 10.67rem; font-size: 6.4rem; }
kbd.wide { width: 15.9rem; }
kbd sup { position: absolute; left: 6.9rem; top: 2.3rem; width: 3rem; text-align: center; font-size: 2.7rem; line-height: 3rem; color: #6b7a80; font-weight: 500; }
kbd svg { fill: none; stroke: #4c606a; stroke-width: 4.5; }
.shift { width: 6.2rem; height: 5.8rem; }
.erase { width: 7rem; height: 5.5rem; }
.globe { width: 6rem; height: 6rem; stroke-width: 4; }
kbd.mode { font-size: 4.1rem; font-weight: 500; color: #4a5d66; }
kbd.comma { flex-direction: column; justify-content: flex-start; line-height: 6rem; font-size: 5rem; padding-top: 3.2rem; }
kbd.comma svg { width: 3rem; height: 3rem; stroke-width: 2.2; margin-bottom: -.6rem; flex: none; }
kbd.space { width: 37.6rem; height: 6.5rem; margin: 3.6rem 2.5rem 0; background: #c9cdd0; border-radius: .8rem; font-size: 3.5rem; color: #727c82; letter-spacing: .01em; }
.enter { width: 9.7rem; height: 9.7rem; border-radius: 50%; background: #4db6ac; display: flex; align-items: center; justify-content: center; color: #fff; }
.enter svg { stroke: none; fill: #fff; }
```
